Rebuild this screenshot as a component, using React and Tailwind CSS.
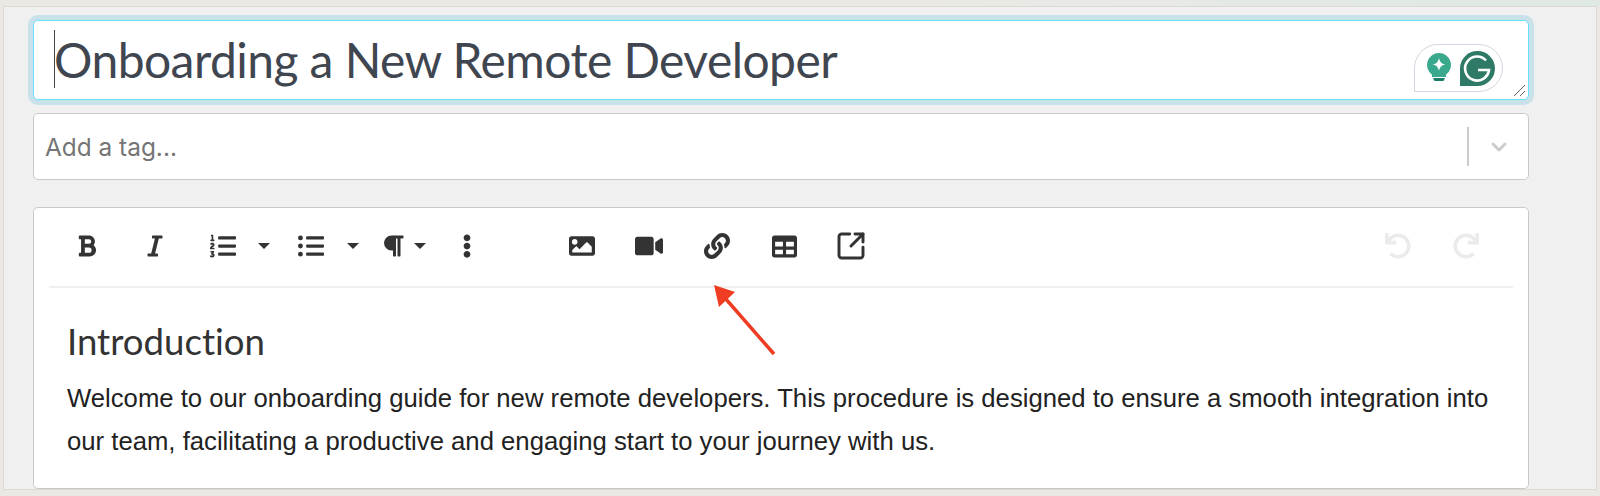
import {
  FaBold,
  FaItalic,
  FaListOl,
  FaListUl,
  FaParagraph,
  FaEllipsisV,
  FaImage,
  FaVideo,
  FaLink,
  FaTable,
  FaUndo,
  FaRedo,
} from "react-icons/fa";
import { SquareArrowOutUpRight, ChevronDown } from "lucide-react";

function Caret({ className }) {
  return <span className={`w-0 h-0 border-x-[6px] border-x-transparent border-t-[6px] border-t-[#333] ${className}`} />;
}

function GrammarlyBadge() {
  return (
    <div className="absolute right-[25px] top-[23px] flex h-[48px] w-[89px] items-center gap-[9px] rounded-[24px] rounded-bl-none border border-[#d5d5e2] bg-white pl-[12px]">
      <svg width="24" height="30" viewBox="0 0 24 30">
        <path d="M12 0a12 12 0 0 1 7 21.7V24H5v-2.300A12 12 0 0 1 12 0z" fill="#3aa88c" />
        <path d="M12 5c.8 4 2.500 5.700 6.500 6.500-4 .8-5.700 2.500-6.500 6.500-.8-4-2.500-5.700-6.500-6.500C9.500 10.700 11.200 9 12 5z" fill="#fff" />
        <path d="M6 25h12l-1.500 3h-9z" fill="#167d68" />
      </svg>
      <svg width="35" height="35" viewBox="0 0 35 35">
        <path d="M17.500 0a17.500 17.500 0 0 1 0 35H0V17.500A17.500 17.500 0 0 1 17.500 0z" fill="#2f7a66" />
        <path d="M26 9.500A12 12 0 1 0 29 19H18" fill="none" stroke="#fff" strokeWidth="2.600" />
      </svg>
    </div>
  );
}

export default function App() {
  return (
    <div className="relative h-[496px] w-[1600px] overflow-hidden bg-[#ece9e4] font-['Liberation_Sans',sans-serif]">
      <div className="h-[6px] bg-gradient-to-r from-[#ece9e4] via-[#ece9e4] to-[#dfe9e4]" />
      <div className="mx-[3px] h-[484px] border border-[#dcdad6] bg-[#f0f0f0] pl-[29px] pr-[67px] pt-[13px]">
        {/* title */}
        <div className="relative h-[80px] rounded-[5px] border border-[#66e0ff] bg-white pl-[20px] ring-[5px] ring-[#c9e1e9]">
          <div className="absolute left-[20px] top-[9px] h-[58px] w-px bg-[#444]" />
          <div className="font-['Lato',sans-serif] text-[48px] leading-[78px] tracking-[-0.55px] text-[#3f4650]">
            Onboarding a New Remote Developer
          </div>
          <GrammarlyBadge />
          <svg className="absolute bottom-[2px] right-[2px]" width="13" height="13" viewBox="0 0 13 13">
            <path d="M1 12 12 1M7 12l5-5" stroke="#666" strokeWidth="1" />
          </svg>
        </div>

        {/* tags */}
        <div className="mt-[13px] flex h-[67px] items-center rounded-[5px] border border-[#c9c9c9] bg-white pl-[11px]">
          <span className="pt-[2px] font-['Inter',sans-serif] text-[24.4px] text-[#757575]">Add a tag...</span>
          <span className="ml-auto h-[39px] w-[2px] bg-[#cccccc]" />
          <ChevronDown className="ml-[18px] mr-[17px] text-[#cccccc]" size={24} strokeWidth={3} />
        </div>

        {/* editor */}
        <div className="mt-[27px] h-[282px] rounded-[5px] border border-[#c9c9c9] bg-white px-[15px]">
          <div className="flex h-[80px] items-center border-b-2 border-[#f0f0f0] pb-[2px] text-[#333]">
            <FaBold className="ml-[26px]" size={24} />
            <FaItalic className="ml-[44px]" size={24} />
            <FaListOl className="ml-[43px]" size={26} />
            <Caret className="ml-[22px]" />
            <FaListUl className="ml-[28px]" size={26} />
            <Caret className="ml-[23px]" />
            <FaParagraph className="ml-[22px]" size={24} />
            <Caret className="ml-[9px]" />
            <FaEllipsisV className="ml-[29px]" size={24} />
            <FaImage className="ml-[90px]" size={26} />
            <FaVideo className="ml-[40px]" size={28} />
            <FaLink className="ml-[41px]" size={26} />
            <FaTable className="ml-[42px]" size={25} />
            <SquareArrowOutUpRight className="ml-[38px]" size={32} strokeWidth={2.2} />
            <FaUndo className="ml-auto text-[#ebebeb]" size={26} />
            <FaRedo className="ml-[42px] mr-[34px] text-[#ebebeb]" size={26} />
          </div>
          <div className="pl-[18px] pr-[10px] pt-[31px]">
            <h2 className="font-['Lato',sans-serif] text-[36.6px] leading-[44px] text-[#333] [font-variant-ligatures:none]">Introduction</h2>
            <p className="mt-[14px] text-[25.7px] leading-[43px] text-[#222]">
              Welcome to our onboarding guide for new remote developers. This procedure is designed to ensure a smooth integration into our team, facilitating a productive and engaging start to your journey with us.
            </p>
          </div>
        </div>
      </div>

      {/* annotation arrow */}
      <svg className="absolute left-[700px] top-[280px]" width="90" height="80" viewBox="0 0 90 80">
        <path d="M74 74 25 18" stroke="#ee3d22" strokeWidth="3.500" />
        <path d="M14 5l21 7-16 15z" fill="#ee3d22" />
      </svg>
    </div>
  );
}
